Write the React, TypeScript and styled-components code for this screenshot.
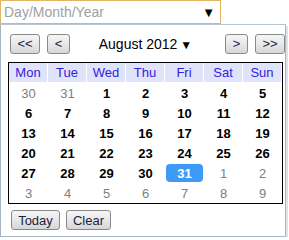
import * as React from 'react';
import styled, { createGlobalStyle } from 'styled-components';

const GlobalStyle = createGlobalStyle`
  html, body {
    margin: 0;
    padding: 0;
    background: #ffffff;
    font-family: 'Liberation Sans', Arial, sans-serif;
  }
`;

const Picker = styled.div`
  width: 286px;
  display: flex;
  flex-direction: column;
`;

const Field = styled.div`
  width: 211px;
  height: 22px;
  border: 1px solid #e2b464;
  display: flex;
  align-items: center;
  justify-content: space-between;
  padding: 0 5px 0 3px;
  box-sizing: content-box;
  margin-right: auto;
`;

const Placeholder = styled.span`
  color: #a0a0a0;
  font-size: 14px;
`;

const Arrow = styled.span`
  font-size: 13px;
  color: #000;
`;

const Popup = styled.div`
  border: 1px solid #a6b4c4;
  border-top-color: #b8c4d0;
  box-shadow: 2px 2px 0 #dfe4ea;
  background: #fff;
  height: 213px;
  box-sizing: border-box;
  padding: 8px 0 0 7px;
  display: flex;
  flex-direction: column;
`;

const NavRow = styled.div`
  display: flex;
  align-items: center;
  height: 21px;
  padding-left: 2px;
  margin-bottom: 8px;
`;

const Btn = styled.button<{ $w: number }>`
  width: ${(p) => p.$w}px;
  height: 20px;
  padding: 0;
  font-family: 'Liberation Sans', Arial, sans-serif;
  font-size: 13px;
  color: #1c1c44;
  border: 1px solid #8a8a8a;
  border-radius: 3px;
  background: linear-gradient(#f6f6f6, #e8e8e8 50%, #d6d6d6);
  display: flex;
  align-items: center;
  justify-content: center;
`;

const NavGap = styled.div`
  width: 7px;
`;

const Title = styled.div`
  flex: 1;
  text-align: center;
  font-size: 14px;
  color: #000;
  padding-right: 4px;
`;

const Caret = styled.span`
  font-size: 12px;
  margin-left: 3px;
`;

const Grid = styled.div`
  width: 275px;
  border: 1px solid #000;
  display: grid;
  grid-template-columns: repeat(7, 1fr);
  box-sizing: border-box;
`;

const HeadCell = styled.div`
  height: 19px;
  margin: 0 1px 1px 0;
  background: #e0e4fb;
  color: #3520dc;
  font-size: 13px;
  display: flex;
  align-items: center;
  justify-content: center;
`;

const DayCell = styled.div<{ $other?: boolean; $sel?: boolean }>`
  height: 18px;
  margin: 1px;
  border-radius: 4px;
  display: flex;
  align-items: center;
  justify-content: center;
  font-size: 13px;
  font-weight: ${(p) => (p.$other ? 'normal' : 'bold')};
  color: ${(p) => (p.$sel ? '#fff' : p.$other ? '#808080' : '#000')};
  background: ${(p) => (p.$sel ? '#3d9bf7' : 'transparent')};
`;

const Footer = styled.div`
  display: flex;
  gap: 6px;
  padding: 6px 0 0 3px;
`;

const days = ['Mon', 'Tue', 'Wed', 'Thu', 'Fri', 'Sat', 'Sun'];

const cells: { d: number; other: boolean }[] = [];
cells.push({ d: 30, other: true }, { d: 31, other: true });
for (let i = 1; i <= 31; i++) cells.push({ d: i, other: false });
for (let i = 1; i <= 9; i++) cells.push({ d: i, other: true });

export default function App() {
  return (
    <>
      <GlobalStyle />
      <Picker>
        <Field>
          <Placeholder>Day/Month/Year</Placeholder>
          <Arrow>▼</Arrow>
        </Field>
        <Popup>
          <NavRow>
            <Btn $w={30}>&lt;&lt;</Btn>
            <NavGap />
            <Btn $w={23}>&lt;</Btn>
            <Title>
              August 2012<Caret>▼</Caret>
            </Title>
            <Btn $w={23}>&gt;</Btn>
            <NavGap />
            <Btn $w={30}>&gt;&gt;</Btn>
          </NavRow>
          <Grid>
            {days.map((d) => (
              <HeadCell key={d}>{d}</HeadCell>
            ))}
            {cells.map((c, i) => (
              <DayCell key={i} $other={c.other} $sel={!c.other && c.d === 31}>
                {c.d}
              </DayCell>
            ))}
          </Grid>
          <Footer>
            <Btn $w={49}>Today</Btn>
            <Btn $w={45}>Clear</Btn>
          </Footer>
        </Popup>
      </Picker>
    </>
  );
}
